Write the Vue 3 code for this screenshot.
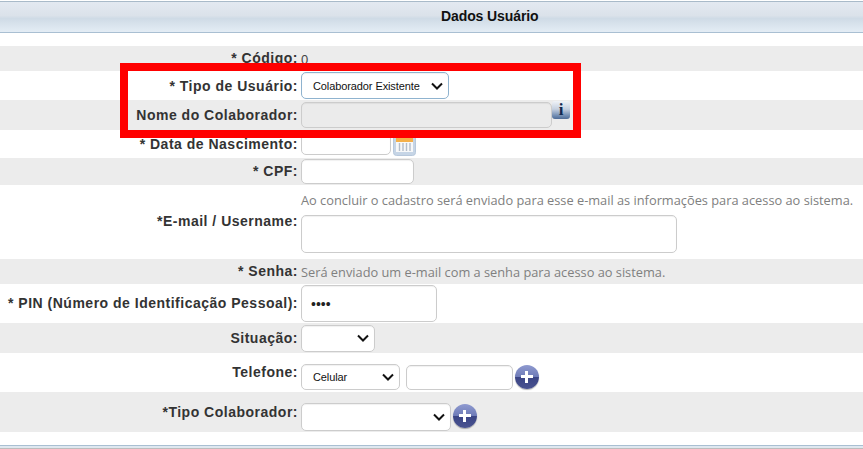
<script setup>
</script>

<template>
  <div class="page">
    <div class="header">Dados Usuário</div>
    <div class="spacer"></div>

    <div class="row gray h25 up">
      <label class="lab">* Código:</label>
      <span class="val">0</span>
    </div>
    <div class="row h29">
      <label class="lab">* Tipo de Usuário:</label>
      <div class="sel tipo focus"><span>Colaborador Existente</span><svg class="chev" viewBox="0 0 12 8"><path d="M1 1.5 6 6.5 11 1.5" /></svg></div>
    </div>
    <div class="row gray h30">
      <label class="lab">Nome do Colaborador:</label>
      <div class="inp nome dis"></div>
      <div class="info"><i>i</i></div>
    </div>
    <div class="row h28 clip">
      <label class="lab">* Data de Nascimento:</label>
      <div class="inp data"></div>
      <svg class="cal" viewBox="0 0 23 26">
        <rect x="0.5" y="0.5" width="22" height="25" rx="3" fill="#c6d5e6" stroke="#b7c8dc" />
        <rect x="3" y="2" width="17" height="10" fill="#f4b04a" />
        <rect x="3" y="12" width="17" height="10" fill="#f7f8f9" />
        <path d="M6.5 13v8M10 13v8M13.5 13v8M17 13v8" stroke="#b3bdca" stroke-width="1.4" />
      </svg>
    </div>
    <div class="row gray h27 up">
      <label class="lab">* CPF:</label>
      <div class="inp cpf"></div>
    </div>
    <div class="row h74 email">
      <label class="lab lab-email">*E-mail / Username:</label>
      <div class="stack">
        <p class="hint">Ao concluir o cadastro será enviado para esse e-mail as informações para acesso ao sistema.</p>
        <div class="inp mail"></div>
      </div>
    </div>
    <div class="row gray h25 up">
      <label class="lab">* Senha:</label>
      <span class="hint">Será enviado um e-mail com a senha para acesso ao sistema.</span>
    </div>
    <div class="row h39 up">
      <label class="lab">* PIN (Número de Identificação Pessoal):</label>
      <div class="inp pin"><span>••••</span></div>
    </div>
    <div class="row gray h30">
      <label class="lab">Situação:</label>
      <div class="sel sit"><svg class="chev" viewBox="0 0 12 8"><path d="M1 1.5 6 6.5 11 1.5" /></svg></div>
    </div>
    <div class="row h39 low">
      <label class="lab">Telefone:</label>
      <div class="sel cel"><span>Celular</span><svg class="chev" viewBox="0 0 12 8"><path d="M1 1.5 6 6.5 11 1.5" /></svg></div>
      <div class="inp fone"></div>
      <div class="plus"></div>
    </div>
    <div class="row gray h40 low2">
      <label class="lab">*Tipo Colaborador:</label>
      <div class="sel colab"><svg class="chev" viewBox="0 0 12 8"><path d="M1 1.5 6 6.5 11 1.5" /></svg></div>
      <div class="plus"></div>
    </div>
    <div class="footer-line"></div>

    <div class="redbox"></div>
  </div>
</template>

<style>
html, body { margin: 0; background: #fff; overflow: hidden; }
</style>

<style scoped>
.page {
  position: relative;
  width: 863px;
  height: 449px;
  overflow: hidden;
  background: #fff;
  font-family: "Liberation Sans", Arial, sans-serif;
  color: #333;
}
.header {
  box-sizing: border-box;
  height: 32px;
  margin-top: 1px;
  border-top: 1px solid #a9bac9;
  border-bottom: 1px solid #a9bfd2;
  background: linear-gradient(#e3e9f1 0, #dbe2ea 45%, #cfdbe6 55%, #e4edf5 100%);
  padding-left: 441px;
  line-height: 28px;
  font-size: 14px;
  font-weight: bold;
  color: #111;
  letter-spacing: -0.1px;
}
.spacer { height: 13px; }
.row {
  display: flex;
  align-items: center;
  box-sizing: border-box;
}
.gray { background: #ececec; }
.h25 { height: 25px; }
.h27 { height: 27px; }
.h28 { height: 28px; }
.h29 { height: 29px; }
.h30 { height: 30px; }
.h39 { height: 39px; }
.h40 { height: 40px; }
.h74 { height: 74px; }
.lab {
  flex: 0 0 298px;
  text-align: right;
  font-size: 14px;
  font-weight: bold;
  letter-spacing: 0.5px;
  margin-right: 3px;
  white-space: nowrap;
  color: #333;
}
.up .lab { margin-top: -2px; }
.val { font-size: 13px; color: #444; line-height: 25px; margin-top: 1px; }
.inp, .sel {
  box-sizing: border-box;
  background: #fff;
  border: 1px solid #ccc;
  border-radius: 5px;
  box-shadow: inset 0 1px 1px rgba(0, 0, 0, 0.06);
}
.sel {
  display: flex;
  align-items: center;
  font-size: 11px;
  letter-spacing: -0.1px;
  color: #111;
  padding: 0 5px 0 11px;
}
.sel.focus { border-color: #8fb3cf; }
.chev { width: 12px; height: 8px; flex: none; margin-left: auto; }
.chev path { fill: none; stroke: #111; stroke-width: 2; }
.tipo { width: 148px; height: 27px; }
.nome { width: 251px; height: 26px; }
.dis { background: #ebebeb; }
.info {
  width: 18px;
  height: 18px;
  margin: -10px 0 0 0;
  border-radius: 3px;
  background: linear-gradient(#f0f3f7 0, #c5d0e0 45%, #6a86ad 85%, #4f6c96 100%);
  text-align: center;
}
.info i {
  font: bold 17px/17px "Liberation Serif", serif;
  color: #12294f;
}
.clip { overflow: hidden; align-items: flex-start; }
.clip .lab { margin-top: 6px; }
.data { width: 90px; height: 30px; margin-top: -5px; }
.cal { width: 23px; height: 26px; flex: none; margin-left: 2px; }
.cpf { width: 113px; height: 25px; }
.email { align-items: flex-start; }
.lab-email { margin-top: 28px; }
.stack { display: flex; flex-direction: column; }
.hint {
  margin: 0;
  font-family: "Open Sans", sans-serif;
  font-size: 12.8px;
  color: #808080;
  white-space: nowrap;
}
.stack .hint { margin-top: 7px; line-height: 17px; }
.mail { width: 376px; height: 38px; margin-top: 6px; }
.pin { width: 136px; height: 37px; display: flex; align-items: center; padding-left: 9px; font-size: 14px; color: #222; }
.sit { width: 74px; height: 27px; }
.low { align-items: flex-start; }
.low .lab { margin-top: 11px; }
.cel { width: 99px; height: 26px; margin-top: 11px; }
.fone { width: 107px; height: 25px; margin: 12px 0 0 6px; }
.plus {
  position: relative;
  width: 24px;
  height: 24px;
  margin: 12px 0 0 2px;
  border-radius: 50%;
  background: linear-gradient(#8f9ad0 0, #6f7cb8 48%, #3b4585 52%, #4a5390 100%);
  box-shadow: 0 1px 1px rgba(0, 0, 0, 0.3);
}
.plus::before, .plus::after {
  content: "";
  position: absolute;
  background: #fff;
}
.plus::before { left: 6px; right: 6px; top: 10px; height: 3px; }
.plus::after { top: 6px; bottom: 6px; left: 10px; width: 3px; }
.low2 { align-items: flex-start; }
.low2 .lab { margin-top: 12px; }
.colab { width: 150px; height: 28px; margin-top: 11px; }
.colab + .plus { margin: 12px 0 0 2px; }
.footer-line {
  box-sizing: border-box;
  height: 4px;
  margin-top: 13px;
  border-top: 1px solid #a9bfd2;
  border-bottom: 1px solid #bdbdbd;
  background: #dfe8f0;
}
.redbox {
  position: absolute;
  left: 120px;
  top: 63px;
  width: 461px;
  height: 75px;
  box-sizing: border-box;
  border: 8px solid #ff0000;
  pointer-events: none;
}
</style>
